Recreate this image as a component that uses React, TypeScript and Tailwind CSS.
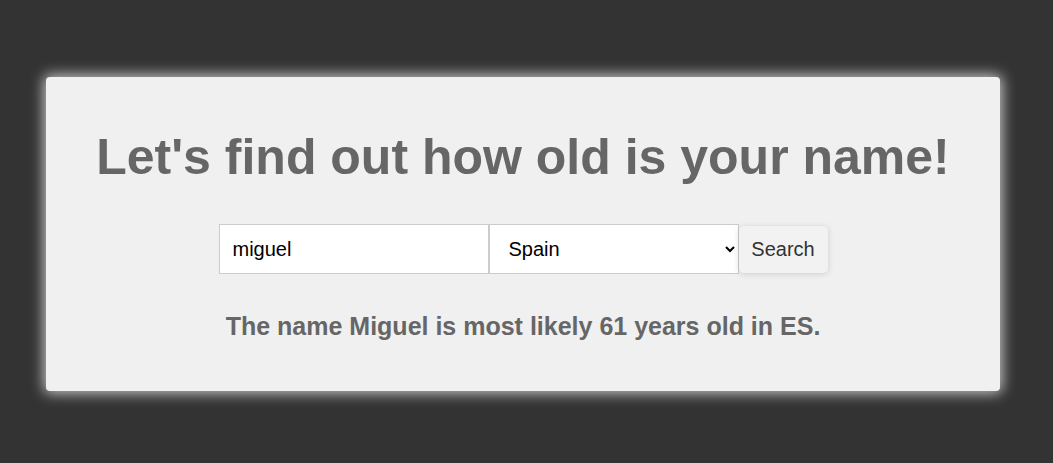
export default function App() {
  return (
    <div className="min-h-screen bg-[#333333] pt-[77px] px-[46px] font-['Liberation_Sans',Arial,sans-serif]">
      <div className="w-[954px] h-[314px] bg-[#f0f0f0] rounded-[4px] shadow-[0_0_14px_2px_rgba(255,255,255,0.75)] flex flex-col items-center pt-[52px]">
        <h1 className="text-[50px] font-bold text-[#666666] leading-[56px]">Let's find out how old is your name!</h1>
        <div className="flex items-center mt-[39px]">
          <input
            type="text"
            defaultValue="miguel"
            className="w-[270px] h-[50px] bg-white border border-[#cccccc] px-[13px] text-[20px] text-black outline-none"
          />
          <select
            defaultValue="ES"
            className="w-[250px] h-[50px] bg-white border border-[#cccccc] pl-[15px] pr-[4px] text-[20px] text-black outline-none"
          >
            <option value="ES">Spain</option>
            <option value="US">United States</option>
          </select>
          <button className="w-[89px] h-[47px] bg-[#f2f2f2] rounded-[5px] text-[20px] text-[#333333] shadow-[0_1px_6px_rgba(0,0,0,0.15)]">
            Search
          </button>
        </div>
        <p className="mt-[38px] text-[25px] leading-[29px] font-bold text-[#666666]">The name Miguel is most likely 61 years old in ES.</p>
      </div>
    </div>
  );
}
